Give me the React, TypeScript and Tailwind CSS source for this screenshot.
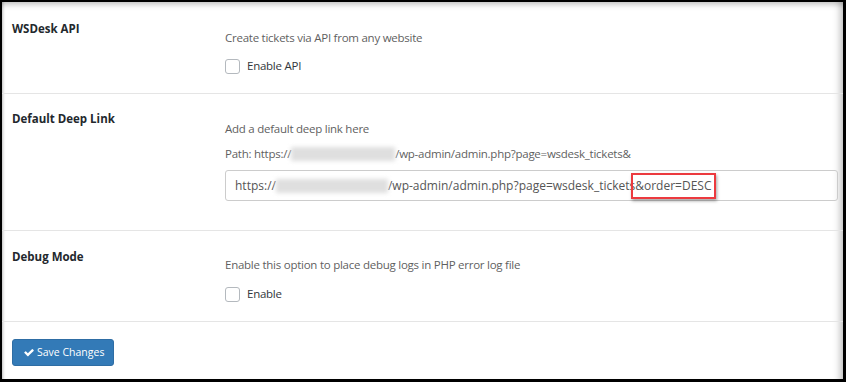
import React from 'react';

// blurred-out hostname in the screenshot
const Blur: React.FC<{ w: string }> = ({ w }) => (
  <span className={`inline-block ${w} h-[14px] align-[-3px] bg-[#dfdfdf] blur-[2px]`} />
);

const Checkbox: React.FC<{ label: string }> = ({ label }) => (
  <label className="flex items-center gap-[7px] text-[11.5px] tracking-[-0.25px] leading-[16px] text-[#32373c]">
    <span className="w-[15px] h-[15px] rounded-[3px] border border-[#b4b9be] bg-white" />
    {label}
  </label>
);

const Label: React.FC<{ children: React.ReactNode; pt: string }> = ({ children, pt }) => (
  <div className={`w-[223px] shrink-0 pl-[10px] ${pt} text-[11.5px] leading-[16px] font-bold text-[#23282d]`}>
    {children}
  </div>
);

const desc = 'text-[11.5px] tracking-[-0.25px] leading-[16px] text-[#5f5f5f]';

export default function App() {
  return (
    <div className="w-[846px] h-[382px] bg-black pt-[2px] pl-[2px] pr-[3px] pb-[3px] font-['Open_Sans','Noto_Sans',sans-serif]">
      <div className="h-full bg-white flex flex-col shadow-[inset_0_7px_6px_-5px_rgba(0,0,0,0.28),inset_-9px_0_7px_-6px_rgba(0,0,0,0.25),inset_4px_0_3px_-3px_rgba(0,0,0,0.25)]">
        {/* WSDesk API */}
        <div className="flex h-[92px] border-b border-[#e5e5e5]">
          <Label pt="pt-[19px]">WSDesk API</Label>
          <div className="pt-[28px]">
            <p className={desc}>Create tickets via API from any website</p>
            <div className="mt-[12px]">
              <Checkbox label="Enable API" />
            </div>
          </div>
        </div>

        {/* Default Deep Link */}
        <div className="flex h-[137px] border-b border-[#e5e5e5]">
          <Label pt="pt-[17px]">Default Deep Link</Label>
          <div className="flex-1 pt-[27px] pr-[5px]">
            <p className={desc}>Add a default deep link here</p>
            <p className={`mt-[9px] ${desc}`}>
              Path: https://<Blur w="w-[104px]" />/wp-admin/admin.php?page=wsdesk_tickets&amp;
            </p>
            <div className="mt-[8px] h-[31px] border border-[#ccc] rounded-[3px] flex items-center pl-[9px] text-[12px] text-[#555]">
              https://<Blur w="w-[112px]" />/wp-admin/admin.php?page=wsdesk_tickets
              <span className="relative">
                &amp;order=DESC
                <span className="absolute -left-[4px] -right-[5px] -top-[4px] -bottom-[4px] border-2 border-[#ec3a3f] shadow-[1px_2px_3px_rgba(0,0,0,0.35)]" />
              </span>
            </div>
          </div>
        </div>

        {/* Debug Mode */}
        <div className="flex h-[91px] border-b border-[#e5e5e5]">
          <Label pt="pt-[18px]">Debug Mode</Label>
          <div className="pt-[26px]">
            <p className={desc}>Enable this option to place debug logs in PHP error log file</p>
            <div className="mt-[13px]">
              <Checkbox label="Enable" />
            </div>
          </div>
        </div>

        <div className="pl-[10px] pt-[17px]">
          <button className="h-[27px] pl-[10px] pr-[9px] rounded-[3px] bg-[#337ab7] border border-[#2e6da4] text-white text-[10.5px] flex items-center gap-[2px]">
            <svg width="12" height="11" viewBox="0 0 1792 1792" fill="white">
              <path d="M1671 566q0 40-28 68l-724 724-136 136q-28 28-68 28t-68-28l-136-136-362-362q-28-28-28-68t28-68l136-136q28-28 68-28t68 28l294 295 656-657q28-28 68-28t68 28l136 136q28 28 28 68z" />
            </svg>
            Save Changes
          </button>
        </div>
      </div>
    </div>
  );
}
